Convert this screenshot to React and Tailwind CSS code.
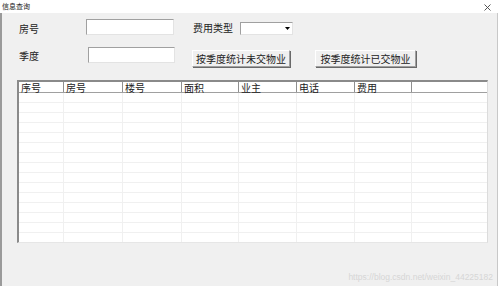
import React from 'react';

const COLUMNS = [
  { name: '序号', w: 'w-[45px]' },
  { name: '房号', w: 'w-[59px]' },
  { name: '楼号', w: 'w-[59px]' },
  { name: '面积', w: 'w-[57px]' },
  { name: '业主', w: 'w-[58px]' },
  { name: '电话', w: 'w-[58px]' },
  { name: '费用', w: 'w-[57px]' },
];

const ROWS = Array.from({ length: 15 });

const font = { fontFamily: '"Noto Sans CJK SC", "Liberation Sans", sans-serif' };

function TextBox({ className = '' }) {
  return (
    <div
      className={`h-[16px] bg-white border border-[#a0a0a0] border-r-[#e3e3e3] border-b-[#e3e3e3] ${className}`}
    />
  );
}

function Button({ children, className = '' }) {
  return (
    <button
      className={`h-[17px] bg-[#f0f0f0] border-t border-l border-white border-r border-b border-r-[#a0a0a0] border-b-[#a0a0a0] shadow-[1px_1px_0_#696969] text-[10px] leading-none text-[#222] flex items-center justify-center ${className}`}
    >
      {children}
    </button>
  );
}

export default function App() {
  return (
    <div className="w-[498px] h-[286px] bg-[#f0f0f0] flex flex-col overflow-hidden" style={font}>
      {/* Title bar */}
      <div className="h-[13px] bg-white flex items-center justify-between pl-[2px] pr-[7px]">
        <span className="text-[7px] leading-none text-[#222]">信息查询</span>
        <svg width="7" height="7" viewBox="0 0 7 7" className="mt-[2px]">
          <path d="M0.5 0.5 L6.5 6.5 M6.5 0.5 L0.5 6.5" stroke="#444" strokeWidth="0.9" />
        </svg>
      </div>

      {/* Body */}
      <div className="flex-1 flex flex-col border-l-2 border-l-[#9a9a9a] border-r border-r-[#c8c8c8]">
        {/* Row 1 */}
        <div className="mt-[6px] flex items-start h-[16px]">
          <span className="ml-[17px] w-[67px] text-[10px] leading-[19px] text-[#222]">房号</span>
          <TextBox className="w-[88px]" />
          <span className="ml-[19px] w-[47px] text-[10px] leading-[17px] text-[#222]">费用类型</span>
          <div className="mt-[3px] w-[53px] h-[13px] bg-white border border-[#a0a0a0] border-r-[#e3e3e3] border-b-[#e3e3e3] flex justify-end items-center pr-[2px]">
            <svg width="5" height="3" viewBox="0 0 5 3">
              <path d="M0 0 L5 0 L2.5 3 Z" fill="#000" />
            </svg>
          </div>
        </div>

        {/* Row 2 */}
        <div className="mt-[12px] flex items-start h-[20px]">
          <span className="ml-[17px] w-[69px] text-[10px] leading-[18px] text-[#222]">季度</span>
          <TextBox className="w-[87px]" />
          <Button className="ml-[17px] mt-[3px] w-[98px]">按季度统计未交物业</Button>
          <Button className="ml-[25px] mt-[3px] w-[101px]">按季度统计已交物业</Button>
        </div>

        {/* Table */}
        <div className="mt-[13px] ml-[15px] w-[471px] h-[163px] bg-white border-l-2 border-t-2 border-l-[#8a8a8a] border-t-[#8a8a8a] border-r border-b border-r-[#dcdcdc] border-b-[#e6e6e6] flex flex-col overflow-hidden">
          <div className="flex h-[11px] border-b border-b-[#a0a0a0] shrink-0">
            {COLUMNS.map((c) => (
              <div
                key={c.name}
                className={`${c.w} shrink-0 border-r border-r-[#8f8f8f] pl-[2px] text-[10px] leading-[11px] text-[#222]`}
              >
                {c.name}
              </div>
            ))}
            <div className="flex-1" />
          </div>
          {ROWS.map((_, i) => (
            <div key={i} className="flex h-[10px] shrink-0 border-b border-b-[#f0f0f0]">
              {COLUMNS.map((c) => (
                <div key={c.name} className={`${c.w} shrink-0 border-r border-r-[#f0f0f0]`} />
              ))}
              <div className="flex-1" />
            </div>
          ))}
        </div>

        {/* Watermark */}
        <div className="mt-auto mb-[5px] flex justify-end pr-[4px]">
          <span className="text-[8.5px] leading-none text-[#d6d6d6]" style={{ fontFamily: '"Liberation Sans", sans-serif' }}>
            https://blog.csdn.net/weixin_44225182
          </span>
        </div>
      </div>
    </div>
  );
}
